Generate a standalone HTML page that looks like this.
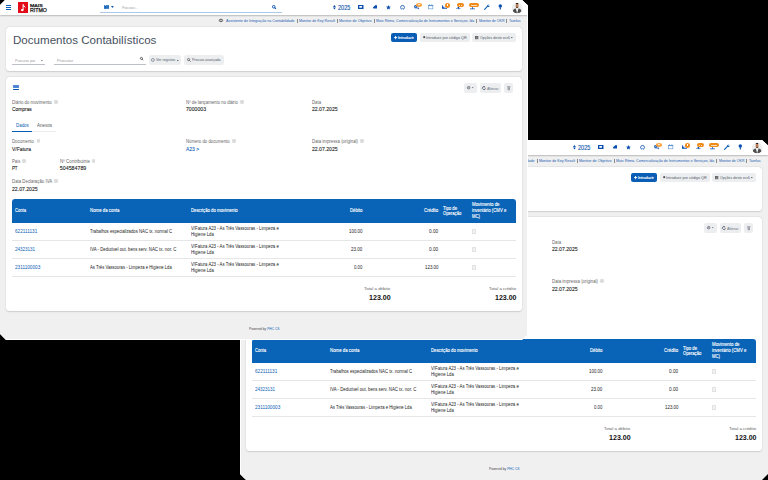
<!DOCTYPE html>
<html><head><meta charset="utf-8"><style>
*{margin:0;padding:0;box-sizing:border-box}
html,body{width:768px;height:480px;overflow:hidden;background:#000}
body{position:relative;font-family:"Liberation Sans",sans-serif}
.win{position:absolute;width:528px;height:340px;background:#f0f0f0;overflow:hidden;clip-path:polygon(5px 0,522px 0,528px 5.5px,528px 334px,522px 340px,6px 340px,0 334px,0 5px)}
.a{position:absolute;white-space:nowrap}
.card{position:absolute;background:#fff;border-radius:3.5px;box-shadow:0 0 0 0.4px rgba(0,0,0,.05),0 0.6px 1.4px rgba(0,0,0,.12)}

</style></head><body>
<div class="win" style="left:240px;top:140px"><div class="a" style="left:0px;top:0px;width:528.00px;height:15.00px;background:#fff;box-shadow:0 0.6px 1.2px rgba(0,0,0,.22)"></div>
<div class="a" style="left:6px;top:5px;width:5.20px;height:1.00px;background:#0a5db4;"></div>
<div class="a" style="left:6px;top:7px;width:5.20px;height:1.00px;background:#0a5db4;"></div>
<div class="a" style="left:6px;top:9px;width:5.20px;height:1.00px;background:#0a5db4;"></div>
<div class="a" style="left:17.5px;top:2px;width:10.70px;height:10.80px;background:#e30b17;"></div>
<svg class="a" style="left:17.5px;top:2px" width="10.7" height="10.8" viewBox="0 0 10.7 10.8"><rect x="4.6" y="2.1" width="1" height="6.2" fill="#fff"/><ellipse cx="4.2" cy="8.1" rx="1.35" ry="1.15" fill="#fff"/><path d="M5.1 2.1 C5.4 3.6 7.9 4.2 7.4 6.4 C7.1 5.2 6.3 4.6 5.3 4.4 Z" fill="#fff"/></svg>
<div class="a" style="left:29.90px;top:4px;font-size:4.3px;line-height:4.3px;color:#1a1a1a;transform:scaleX(1.2176);transform-origin:0 0;-webkit-text-stroke:0.25px #1a1a1a;">MAIS</div>
<div class="a" style="left:29.90px;top:9px;font-size:4.9px;line-height:4.9px;color:#1a1a1a;transform:scaleX(1.0706);transform-origin:0 0;-webkit-text-stroke:0.25px #1a1a1a;">RITMO</div>
<div class="a" style="left:100px;top:11.8px;width:181.50px;height:0.70px;background:#a9c8ea;"></div>
<div class="a" style="left:104px;top:5.6px;width:4.50px;height:3.60px;background:#0a5db4;"></div>
<div class="a" style="left:122.00px;top:6px;font-size:4.2px;line-height:4.2px;color:#9a9a9a;transform:scaleX(0.8000);transform-origin:0 0;">Procurar...</div>
<div class="a" style="left:337.50px;top:5px;font-size:6.4px;line-height:6.4px;color:#1a5cb0;transform:scaleX(0.8639);transform-origin:0 0;-webkit-text-stroke:0.15px #1a5cb0;">2025</div>
<div class="a" style="left:225.70px;top:20px;font-size:3.8px;line-height:3.8px;color:#1a5cb0;transform:scaleX(0.9621);transform-origin:0 0;">Assistente de Integração na Contabilidade</div>
<div class="a" style="left:299.00px;top:20px;font-size:3.8px;line-height:3.8px;color:#1a5cb0;transform:scaleX(0.9630);transform-origin:0 0;">Monitor de Key Result</div>
<div class="a" style="left:339.00px;top:20px;font-size:3.8px;line-height:3.8px;color:#1a5cb0;transform:scaleX(0.9864);transform-origin:0 0;">Monitor de Objetivo</div>
<div class="a" style="left:376.00px;top:20px;font-size:3.8px;line-height:3.8px;color:#1a5cb0;transform:scaleX(0.9509);transform-origin:0 0;">Mais Ritmo, Comercialização de Instrumentos e Serviços, lda</div>
<div class="a" style="left:478.50px;top:20px;font-size:3.8px;line-height:3.8px;color:#1a5cb0;transform:scaleX(0.9360);transform-origin:0 0;">Monitor de OKR</div>
<div class="a" style="left:508.50px;top:20px;font-size:3.8px;line-height:3.8px;color:#1a5cb0;transform:scaleX(0.9229);transform-origin:0 0;">Tarefas</div>
<div class="a" style="left:296.5px;top:19.3px;width:0.40px;height:3.60px;background:#8a8a8a;"></div>
<div class="a" style="left:337px;top:19.3px;width:0.40px;height:3.60px;background:#8a8a8a;"></div>
<div class="a" style="left:373.8px;top:19.3px;width:0.40px;height:3.60px;background:#8a8a8a;"></div>
<div class="a" style="left:476.3px;top:19.3px;width:0.40px;height:3.60px;background:#8a8a8a;"></div>
<div class="a" style="left:506.3px;top:19.3px;width:0.40px;height:3.60px;background:#8a8a8a;"></div>
<div class="card" style="left:6px;top:27px;width:516px;height:44px"></div>
<div class="a" style="left:13.00px;top:35px;font-size:10.9px;line-height:10.9px;color:#465061;transform:scaleX(1.0622);transform-origin:0 0;">Documentos Contabilísticos</div>
<div class="a" style="left:14.80px;top:59px;font-size:4.2px;line-height:4.2px;color:#9a9a9a;transform:scaleX(0.8697);transform-origin:0 0;">Procurar por</div>
<div class="a" style="left:12px;top:64.3px;width:33.00px;height:0.60px;background:#bcc0c8;"></div>
<div class="a" style="left:57.00px;top:59px;font-size:4.2px;line-height:4.2px;color:#999;">Procurar</div>
<div class="a" style="left:53.8px;top:64.3px;width:92.20px;height:0.60px;background:#bcc0c8;"></div>
<div class="a" style="left:148.8px;top:55.4px;width:32.7px;height:9.5px;background:#eceef0;border-radius:2.5px"></div>
<div class="a" style="left:156.10px;top:58px;font-size:4.2px;line-height:4.2px;color:#4f5966;transform:scaleX(0.8793);transform-origin:0 0;">Ver registos</div>
<div class="a" style="left:184.2px;top:55.4px;width:39.6px;height:9.5px;background:#eceef0;border-radius:2.5px"></div>
<div class="a" style="left:192.30px;top:58px;font-size:4.2px;line-height:4.2px;color:#4f5966;transform:scaleX(0.8390);transform-origin:0 0;">Procura avançada</div>
<div class="a" style="left:390.9px;top:32.7px;width:26.2px;height:9.3px;background:#0a5db4;border-radius:2px"></div>
<div class="a" style="left:398.20px;top:36px;font-size:4.3px;line-height:4.3px;color:#fff;transform:scaleX(0.8815);transform-origin:0 0;-webkit-text-stroke:0.15px #fff;">Introduzir</div>
<div class="a" style="left:420.1px;top:32.8px;width:49.9px;height:9.1px;background:#eceef0;border-radius:2px"></div>
<div class="a" style="left:426.20px;top:36px;font-size:4.2px;line-height:4.2px;color:#4f5966;transform:scaleX(0.8895);transform-origin:0 0;">Introduzir por código QR</div>
<div class="a" style="left:472.3px;top:32.8px;width:43.3px;height:9px;background:#eceef0;border-radius:2px"></div>
<div class="a" style="left:479.90px;top:36px;font-size:4.2px;line-height:4.2px;color:#4f5966;transform:scaleX(0.8482);transform-origin:0 0;">Opções deste ecrã</div>
<div class="card" style="left:6px;top:77px;width:516px;height:234.2px"></div>
<div class="a" style="left:248.70px;top:327px;font-size:4.0px;line-height:4.0px;color:#444;transform:scaleX(0.8166);transform-origin:0 0;">Powered by <span style="color:#0a5db4">PHC CS</span></div>
<div class="a" style="left:12.8px;top:84.9px;width:5.80px;height:2.90px;background:#4d88d2;border-radius:0.4px"></div>
<div class="a" style="left:12.8px;top:88.9px;width:5.80px;height:1.30px;background:#0a4fb0;border-radius:0.5px"></div>
<div class="a" style="left:12.00px;top:101px;font-size:4.5px;line-height:4.5px;color:#666;transform:scaleX(0.9620);transform-origin:0 0;">Diário do movimento</div>
<div class="a" style="left:54.20px;top:99.80px;width:3.4px;height:4px;border-radius:1.4px;background:#dcdcdc"></div>
<div class="a" style="left:12.00px;top:107px;font-size:5.3px;line-height:5.3px;color:#1e1e1e;transform:scaleX(0.9209);transform-origin:0 0;-webkit-text-stroke:0.1px #1e1e1e;">Compras</div>
<div class="a" style="left:186.00px;top:101px;font-size:4.5px;line-height:4.5px;color:#666;transform:scaleX(0.9561);transform-origin:0 0;">Nº de lançamento no diário</div>
<div class="a" style="left:240.20px;top:99.80px;width:3.4px;height:4px;border-radius:1.4px;background:#dcdcdc"></div>
<div class="a" style="left:186.00px;top:107px;font-size:5.3px;line-height:5.3px;color:#1e1e1e;transform:scaleX(0.9693);transform-origin:0 0;-webkit-text-stroke:0.1px #1e1e1e;">7000003</div>
<div class="a" style="left:312.00px;top:101px;font-size:4.5px;line-height:4.5px;color:#666;transform:scaleX(0.9468);transform-origin:0 0;">Data</div>
<div class="a" style="left:312.00px;top:107px;font-size:5.3px;line-height:5.3px;color:#1e1e1e;transform:scaleX(0.9651);transform-origin:0 0;-webkit-text-stroke:0.1px #1e1e1e;">22.07.2025</div>
<div class="a" style="left:15.90px;top:124px;font-size:4.6px;line-height:4.6px;color:#0a5db4;transform:scaleX(0.9626);transform-origin:0 0;">Dados</div>
<div class="a" style="left:36.80px;top:124px;font-size:4.6px;line-height:4.6px;color:#555;transform:scaleX(0.9842);transform-origin:0 0;">Anexos</div>
<div class="a" style="left:12px;top:131.2px;width:44.30px;height:0.40px;background:#ececec;"></div>
<div class="a" style="left:12px;top:130.9px;width:20.40px;height:0.80px;background:#0a5db4;"></div>
<div class="a" style="left:12.10px;top:140px;font-size:4.5px;line-height:4.5px;color:#666;transform:scaleX(0.9517);transform-origin:0 0;">Documento</div>
<div class="a" style="left:36.70px;top:138.80px;width:3.4px;height:4px;border-radius:1.4px;background:#dcdcdc"></div>
<div class="a" style="left:12.10px;top:147px;font-size:5.3px;line-height:5.3px;color:#1e1e1e;transform:scaleX(0.9348);transform-origin:0 0;-webkit-text-stroke:0.1px #1e1e1e;">V/Fatura</div>
<div class="a" style="left:186.00px;top:140px;font-size:4.5px;line-height:4.5px;color:#666;transform:scaleX(0.9525);transform-origin:0 0;">Número do documento</div>
<div class="a" style="left:232.20px;top:138.80px;width:3.4px;height:4px;border-radius:1.4px;background:#dcdcdc"></div>
<div class="a" style="left:186.00px;top:147px;font-size:5.3px;line-height:5.3px;color:#0a5db4;transform:scaleX(0.9359);transform-origin:0 0;-webkit-text-stroke:0.1px #0a5db4;">A23 &gt;</div>
<div class="a" style="left:312.00px;top:140px;font-size:4.5px;line-height:4.5px;color:#666;transform:scaleX(0.9630);transform-origin:0 0;">Data impressa (original)</div>
<div class="a" style="left:360.40px;top:138.80px;width:3.4px;height:4px;border-radius:1.4px;background:#dcdcdc"></div>
<div class="a" style="left:312.00px;top:147px;font-size:5.3px;line-height:5.3px;color:#1e1e1e;transform:scaleX(0.9651);transform-origin:0 0;-webkit-text-stroke:0.1px #1e1e1e;">22.07.2025</div>
<div class="a" style="left:12.10px;top:160px;font-size:4.5px;line-height:4.5px;color:#666;transform:scaleX(0.9107);transform-origin:0 0;">País</div>
<div class="a" style="left:22.30px;top:158.80px;width:3.4px;height:4px;border-radius:1.4px;background:#dcdcdc"></div>
<div class="a" style="left:12.10px;top:166px;font-size:5.3px;line-height:5.3px;color:#1e1e1e;transform:scaleX(0.8121);transform-origin:0 0;-webkit-text-stroke:0.1px #1e1e1e;">PT</div>
<div class="a" style="left:59.80px;top:160px;font-size:4.5px;line-height:4.5px;color:#666;transform:scaleX(0.9833);transform-origin:0 0;">Nº Contribuinte</div>
<div class="a" style="left:92.00px;top:158.80px;width:3.4px;height:4px;border-radius:1.4px;background:#dcdcdc"></div>
<div class="a" style="left:59.80px;top:166px;font-size:5.3px;line-height:5.3px;color:#1e1e1e;-webkit-text-stroke:0.1px #1e1e1e;">504584789</div>
<div class="a" style="left:12.10px;top:180px;font-size:4.5px;line-height:4.5px;color:#666;transform:scaleX(0.9619);transform-origin:0 0;">Data Declaração IVA</div>
<div class="a" style="left:54.30px;top:178.80px;width:3.4px;height:4px;border-radius:1.4px;background:#dcdcdc"></div>
<div class="a" style="left:12.10px;top:187px;font-size:5.3px;line-height:5.3px;color:#1e1e1e;transform:scaleX(0.9689);transform-origin:0 0;-webkit-text-stroke:0.1px #1e1e1e;">22.07.2025</div>
<div class="a" style="left:464px;top:83.1px;width:12.600000000000023px;height:9.6px;background:#eceef0;border-radius:2px"></div>
<div class="a" style="left:479.5px;top:83.1px;width:21.5px;height:9.6px;background:#eceef0;border-radius:2px"></div>
<div class="a" style="left:504px;top:83.1px;width:9px;height:9.6px;background:#eceef0;border-radius:2px"></div>
<div class="a" style="left:487.00px;top:87px;font-size:4.4px;line-height:4.4px;color:#6a7180;transform:scaleX(0.8951);transform-origin:0 0;">Alterar</div>
<div class="a" style="left:12px;top:199px;width:503.8px;height:23.7px;background:#0964b7;border-radius:3px 3px 0 0"></div>
<div class="a" style="left:14.80px;top:209px;font-size:4.7px;line-height:4.7px;color:#fff;transform:scaleX(0.8850);transform-origin:0 0;-webkit-text-stroke:0.12px #fff;">Conta</div>
<div class="a" style="left:89.80px;top:209px;font-size:4.7px;line-height:4.7px;color:#fff;transform:scaleX(0.9255);transform-origin:0 0;-webkit-text-stroke:0.12px #fff;">Nome da conta</div>
<div class="a" style="left:191.00px;top:209px;font-size:4.7px;line-height:4.7px;color:#fff;transform:scaleX(0.9049);transform-origin:0 0;-webkit-text-stroke:0.12px #fff;">Descrição do movimento</div>
<div class="a" style="left:349.80px;top:209px;font-size:4.7px;line-height:4.7px;color:#fff;transform:scaleX(0.9201);transform-origin:0 0;-webkit-text-stroke:0.12px #fff;">Débito</div>
<div class="a" style="left:423.80px;top:209px;font-size:4.7px;line-height:4.7px;color:#fff;transform:scaleX(0.9438);transform-origin:0 0;-webkit-text-stroke:0.12px #fff;">Crédito</div>
<div class="a" style="left:442.90px;top:207px;font-size:4.7px;line-height:4.7px;color:#fff;transform:scaleX(0.9095);transform-origin:0 0;-webkit-text-stroke:0.12px #fff;">Tipo de</div>
<div class="a" style="left:442.90px;top:212px;font-size:4.7px;line-height:4.7px;color:#fff;transform:scaleX(0.8866);transform-origin:0 0;-webkit-text-stroke:0.12px #fff;">Operação</div>
<div class="a" style="left:472.00px;top:203px;font-size:4.7px;line-height:4.7px;color:#fff;transform:scaleX(0.9350);transform-origin:0 0;-webkit-text-stroke:0.12px #fff;">Movimento de</div>
<div class="a" style="left:472.00px;top:209px;font-size:4.7px;line-height:4.7px;color:#fff;transform:scaleX(0.9172);transform-origin:0 0;-webkit-text-stroke:0.12px #fff;">inventário (CMV e</div>
<div class="a" style="left:472.00px;top:215px;font-size:4.7px;line-height:4.7px;color:#fff;transform:scaleX(0.9015);transform-origin:0 0;-webkit-text-stroke:0.12px #fff;">MC)</div>
<div class="a" style="left:14.80px;top:230px;font-size:4.9px;line-height:4.9px;color:#0a5db4;transform:scaleX(0.9515);transform-origin:0 0;">622111131</div>
<div class="a" style="left:90.20px;top:230px;font-size:4.7px;line-height:4.7px;color:#222;transform:scaleX(0.9071);transform-origin:0 0;">Trabalhos especializados NAC tx. normal C</div>
<div class="a" style="left:191.00px;top:227px;font-size:4.7px;line-height:4.7px;color:#222;transform:scaleX(0.9137);transform-origin:0 0;">V/Fatura A23 - As Três Vassouras - Limpeza e</div>
<div class="a" style="left:191.00px;top:233px;font-size:4.7px;line-height:4.7px;color:#222;transform:scaleX(0.9129);transform-origin:0 0;">Higiene Lda</div>
<div class="a" style="left:348.80px;top:229px;font-size:5.0px;line-height:5.0px;color:#222;transform:scaleX(0.8828);transform-origin:0 0;">100.00</div>
<div class="a" style="left:429.00px;top:229px;font-size:5.0px;line-height:5.0px;color:#222;transform:scaleX(0.9351);transform-origin:0 0;">0.00</div>
<div class="a" style="left:471.8px;top:229.00px;width:4.3px;height:4.8px;background:#f2f2f2;border:0.5px solid #e2e2e2;border-radius:0.6px"></div>
<div class="a" style="left:12px;top:240.2px;width:503.80px;height:0.50px;background:#e6e6e6;"></div>
<div class="a" style="left:14.80px;top:248px;font-size:4.9px;line-height:4.9px;color:#0a5db4;transform:scaleX(0.9174);transform-origin:0 0;">24323131</div>
<div class="a" style="left:90.20px;top:248px;font-size:4.7px;line-height:4.7px;color:#222;transform:scaleX(0.9200);transform-origin:0 0;">IVA - Dedutível out. bens serv. NAC tx. nor. C</div>
<div class="a" style="left:191.00px;top:245px;font-size:4.7px;line-height:4.7px;color:#222;transform:scaleX(0.9137);transform-origin:0 0;">V/Fatura A23 - As Três Vassouras - Limpeza e</div>
<div class="a" style="left:191.00px;top:251px;font-size:4.7px;line-height:4.7px;color:#222;transform:scaleX(0.9129);transform-origin:0 0;">Higiene Lda</div>
<div class="a" style="left:351.00px;top:247px;font-size:5.0px;line-height:5.0px;color:#222;transform:scaleX(0.9031);transform-origin:0 0;">23.00</div>
<div class="a" style="left:429.00px;top:247px;font-size:5.0px;line-height:5.0px;color:#222;transform:scaleX(0.9351);transform-origin:0 0;">0.00</div>
<div class="a" style="left:471.8px;top:247.00px;width:4.3px;height:4.8px;background:#f2f2f2;border:0.5px solid #e2e2e2;border-radius:0.6px"></div>
<div class="a" style="left:12px;top:258.2px;width:503.80px;height:0.50px;background:#e6e6e6;"></div>
<div class="a" style="left:14.80px;top:266px;font-size:4.9px;line-height:4.9px;color:#0a5db4;transform:scaleX(0.9538);transform-origin:0 0;">2311100003</div>
<div class="a" style="left:90.20px;top:266px;font-size:4.7px;line-height:4.7px;color:#222;transform:scaleX(0.8977);transform-origin:0 0;">As Três Vassouras - Limpeza e Higiene Lda</div>
<div class="a" style="left:191.00px;top:263px;font-size:4.7px;line-height:4.7px;color:#222;transform:scaleX(0.9137);transform-origin:0 0;">V/Fatura A23 - As Três Vassouras - Limpeza e</div>
<div class="a" style="left:191.00px;top:269px;font-size:4.7px;line-height:4.7px;color:#222;transform:scaleX(0.9129);transform-origin:0 0;">Higiene Lda</div>
<div class="a" style="left:354.00px;top:265px;font-size:5.0px;line-height:5.0px;color:#222;transform:scaleX(0.8529);transform-origin:0 0;">0.00</div>
<div class="a" style="left:424.60px;top:265px;font-size:5.0px;line-height:5.0px;color:#222;transform:scaleX(0.8828);transform-origin:0 0;">123.00</div>
<div class="a" style="left:471.8px;top:265.00px;width:4.3px;height:4.8px;background:#f2f2f2;border:0.5px solid #e2e2e2;border-radius:0.6px"></div>
<div class="a" style="left:12px;top:276.20000000000005px;width:503.80px;height:0.50px;background:#e6e6e6;"></div>
<div class="a" style="left:364.00px;top:287px;font-size:4.2px;line-height:4.2px;color:#666;transform:scaleX(1.0486);transform-origin:0 0;">Total a débito</div>
<div class="a" style="left:368.50px;top:294px;font-size:7.6px;line-height:7.6px;color:#111;font-weight:bold;transform:scaleX(0.9335);transform-origin:0 0;">123.00</div>
<div class="a" style="left:489.00px;top:287px;font-size:4.2px;line-height:4.2px;color:#666;transform:scaleX(1.0403);transform-origin:0 0;">Total a crédito</div>
<div class="a" style="left:494.70px;top:294px;font-size:7.6px;line-height:7.6px;color:#111;font-weight:bold;transform:scaleX(0.9249);transform-origin:0 0;">123.00</div>
<svg class="a" style="left:332.6px;top:5.2px;overflow:visible" width="2.9" height="4.4" viewBox="0 0 2.9 4.4"><path d="M1.45 0 L2.9 1.9 L0 1.9 Z M0 2.5 L2.9 2.5 L1.45 4.4 Z" fill="#0a4fb0"/></svg>
<svg class="a" style="left:358.4px;top:5.1px;overflow:visible" width="5.5" height="4.4" viewBox="0 0 5.5 4.4"><path d="M0 0 H5.5 V3.9 L5.2 4.3 L4.7 3.9 H0 Z M1.3 1 V2.7 H3.6 L4 2.2 V1 Z" fill="#0a4fb0" fill-rule="evenodd"/></svg>
<svg class="a" style="left:373px;top:5.4px;overflow:visible" width="4" height="3.4" viewBox="0 0 4 3.4"><path d="M0.3 3.4 L0 2.2 L1.2 1.2 L2.2 0.2 L3.6 0 L4 1 L4 3.4 Z" fill="#0a4fb0"/></svg>
<svg class="a" style="left:386.3px;top:4.8px;overflow:visible" width="4.9" height="4.6" viewBox="0 0 4.9 4.6"><path d="M2.45 0 L3.1 1.6 L4.9 1.7 L3.55 2.85 L4 4.6 L2.45 3.65 L0.9 4.6 L1.35 2.85 L0 1.7 L1.8 1.6 Z" fill="#0a4fb0"/></svg>
<svg class="a" style="left:400px;top:4.9px;overflow:visible" width="5.1" height="4.7" viewBox="0 0 5.1 4.7"><circle cx="2.55" cy="2.4" r="1.95" fill="none" stroke="#0a4fb0" stroke-width="0.8"/><path d="M2.55 2.4 L1.9 4.7 H3.2 Z" fill="#fff"/><path d="M2.55 2.3 L2.25 3.9 H2.85Z" fill="#0a4fb0"/></svg>
<svg class="a" style="left:413.5px;top:5.2px;overflow:visible" width="5.6" height="4.3" viewBox="0 0 5.6 4.3"><circle cx="1.75" cy="1.75" r="1.25" fill="none" stroke="#0a4fb0" stroke-width="1.1" stroke-dasharray="0.7 0.35"/><circle cx="1.75" cy="1.75" r="0.9" fill="none" stroke="#0a4fb0" stroke-width="0.8"/><circle cx="4.3" cy="3.3" r="0.85" fill="#0a4fb0"/><circle cx="4.3" cy="3.3" r="0.3" fill="#fff"/></svg>
<div class="a" style="left:416px;top:3px;width:6.3px;height:3.5px;border-radius:50%;background:#f6a445"></div>
<div class="a" style="left:418.4px;top:4.4px;width:1.6px;height:0.8px;background:#fde4c4"></div>
<svg class="a" style="left:427.9px;top:4.4px;overflow:visible" width="5.2" height="5.2" viewBox="0 0 5.2 5.2"><rect x="0.35" y="1.3" width="4.5" height="3.55" fill="none" stroke="#5b95d6" stroke-width="0.6"/><rect x="0" y="1" width="5.2" height="1.1" fill="#5b95d6"/><rect x="1" y="0.1" width="0.6" height="1" fill="#5b95d6"/><rect x="3.6" y="0.1" width="0.6" height="1" fill="#5b95d6"/></svg>
<svg class="a" style="left:442px;top:5.3px;overflow:visible" width="4.9" height="3.7" viewBox="0 0 4.9 3.7"><path d="M0 0.2 H0.8 V3.7 H0 Z M0 1.6 H2.4 V3.7 H0Z M2.4 2.8 H4.9 V3.7 H2.4 Z" fill="#0a4fb0"/><path d="M0.8 1.6 L2.4 2.9 L2.4 1.6 Z" fill="#fff"/></svg>
<div class="a" style="left:444.9px;top:3px;width:5.2px;height:4.9px;border-radius:50%;background:#f08a17"></div>
<div class="a" style="left:447px;top:4.3px;width:1px;height:2px;background:#fff"></div>
<svg class="a" style="left:456.3px;top:7.4px;overflow:visible" width="4.6" height="2.2" viewBox="0 0 4.6 2.2"><path d="M1.6 0 H3.2 V0.9 H4.6 V1.5 H3.2 V2.2 H2.4 V1.5 H0 V0.9 H1.6Z" fill="#0a4fb0"/></svg>
<div class="a" style="left:456.6px;top:3px;width:7.5px;height:4.3px;border-radius:2.2px;background:#f08a17"></div>
<div class="a" style="left:458.6px;top:4.6px;width:1.2px;height:1.2px;background:#fde0bd;box-shadow:2px 0 0 #fde0bd"></div>
<svg class="a" style="left:470.1px;top:7.4px;overflow:visible" width="4.9" height="2.2" viewBox="0 0 4.9 2.2"><path d="M2.1 0 H2.8 V1.4 H4.9 V2.2 H0 V1.4 H2.1Z" fill="#0a4fb0"/></svg>
<div class="a" style="left:468.9px;top:3px;width:9.8px;height:4.3px;border-radius:2.2px;background:#f08a17"></div>
<div class="a" style="left:471.4px;top:4.6px;width:1.2px;height:1.2px;background:#fde0bd;box-shadow:2px 0 0 #fde0bd,4px 0 0 #fde0bd"></div>
<svg class="a" style="left:484px;top:4.4px;overflow:visible" width="6" height="5.6" viewBox="0 0 6 5.6"><path d="M0.6 5.3 L3.6 2.2" stroke="#0a5db4" stroke-width="1.1" stroke-linecap="round"/><path d="M3.2 2.6 C3 1.4 3.8 0.5 5 0.6 L4.2 1.5 L4.6 2.1 L5.5 1.4 C5.7 2.5 4.8 3.3 3.7 3" fill="#0a5db4"/></svg>
<svg class="a" style="left:498.1px;top:4.4px;overflow:visible" width="4.4" height="5.6" viewBox="0 0 4.4 5.6"><circle cx="2.3" cy="2" r="1.75" fill="#0a4fb0"/><rect x="1.7" y="3.4" width="1.2" height="1.6" fill="#0a4fb0"/><rect x="1.9" y="5" width="0.8" height="0.6" fill="#0a4fb0"/></svg>
<svg class="a" style="left:512.2px;top:1.9px;overflow:visible" width="10.3" height="11.5" viewBox="0 0 10.3 11.5"><defs><clipPath id="avc"><circle cx="5.15" cy="5.9" r="5.4"/></clipPath></defs><circle cx="5.15" cy="5.9" r="5.4" fill="#eeeeee"/><g clip-path="url(#avc)"><path d="M0.4 11.6 C0.5 8.2 1.5 6.9 3.4 6.4 L5.15 7.2 L6.9 6.4 C8.8 6.9 9.8 8.2 9.9 11.6Z" fill="#4d4d4f"/><path d="M3.8 6.5 L5.15 11.6 L6.5 6.5 L5.15 7.1Z" fill="#f4f4f4"/><ellipse cx="5.1" cy="3.7" rx="1.45" ry="2.2" fill="#bb7b52"/><path d="M3.5 2.6 C3.3 0.4 6.9 0.4 6.7 2.6 L6.4 2.1 L3.8 2.1Z" fill="#2b1e16"/><path d="M3.8 4.6 C4 6.6 6.2 6.6 6.4 4.6 L5.9 5.3 H4.3Z" fill="#3d2819"/></g></svg>
<svg class="a" style="left:103.7px;top:4.9px;overflow:visible" width="5.1" height="4.1" viewBox="0 0 5.1 4.1"><path d="M0 0 H1.3 V1 H0Z M1.8 0 H5.1 V1 H1.8Z M0 1.5 H1.3 V2.6 H0Z M1.8 1.5 H5.1 V2.6 H1.8Z M0 3.1 H1.3 V4.1 H0Z M1.8 3.1 H5.1 V4.1 H1.8Z" fill="#4a86cc"/></svg>
<svg class="a" style="left:110.9px;top:6.1px;overflow:visible" width="2.8" height="1.9" viewBox="0 0 2.8 1.9"><path d="M0 0 H2.8 L1.4 1.9Z" fill="#0a4fb0"/></svg>
<svg class="a" style="left:271.8px;top:5.1px;overflow:visible" width="4.2" height="4.2" viewBox="0 0 4.2 4.2"><circle cx="1.75" cy="1.75" r="1.3" fill="none" stroke="#0a4fb0" stroke-width="0.95"/><path d="M2.7 2.7 L3.9 3.9" stroke="#0a4fb0" stroke-width="1.1"/></svg>
<svg class="a" style="left:219px;top:19.2px;overflow:visible" width="3.9" height="2.9" viewBox="0 0 3.9 2.9"><ellipse cx="1.95" cy="1.45" rx="1.7" ry="1.25" fill="none" stroke="#333" stroke-width="0.8"/><circle cx="1.95" cy="1.45" r="0.5" fill="#777"/></svg>
<svg class="a" style="left:139.6px;top:57.2px;overflow:visible" width="3.5" height="3.4" viewBox="0 0 3.5 3.4"><circle cx="1.4" cy="1.4" r="1.05" fill="none" stroke="#333" stroke-width="0.7"/><path d="M2.1 2.1 L3.2 3.2" stroke="#333" stroke-width="0.8"/></svg>
<svg class="a" style="left:41.1px;top:59.6px;overflow:visible" width="1.8" height="1.4" viewBox="0 0 1.8 1.4"><path d="M0 0 H1.8 L0.9 1.4Z" fill="#777"/></svg>
<svg class="a" style="left:151px;top:57.9px;overflow:visible" width="3.8" height="3.9" viewBox="0 0 3.8 3.9"><circle cx="1.9" cy="1.95" r="1.45" fill="none" stroke="#7a8594" stroke-width="0.8"/></svg>
<svg class="a" style="left:176.9px;top:59.5px;overflow:visible" width="1.6" height="1.3" viewBox="0 0 1.6 1.3"><path d="M0 0 H1.6 L0.8 1.3Z" fill="#333"/></svg>
<svg class="a" style="left:187px;top:57.7px;overflow:visible" width="4.2" height="3.8" viewBox="0 0 4.2 3.8"><circle cx="1.6" cy="1.6" r="1.1" fill="none" stroke="#555" stroke-width="0.8"/><path d="M2.4 2.4 L3.6 3.6" stroke="#555" stroke-width="0.9"/></svg>
<svg class="a" style="left:393.9px;top:35.7px;overflow:visible" width="3.2" height="3.2" viewBox="0 0 3.2 3.2"><path d="M1.6 0 V3.2 M0 1.6 H3.2" stroke="#fff" stroke-width="0.9"/></svg>
<svg class="a" style="left:423.1px;top:36.2px;overflow:visible" width="2.4" height="2.4" viewBox="0 0 2.4 2.4"><circle cx="1.2" cy="1.2" r="1.1" fill="#555"/></svg>
<svg class="a" style="left:475.2px;top:35.6px;overflow:visible" width="3.3" height="3.2" viewBox="0 0 3.3 3.2"><rect x="0" y="0" width="3.3" height="3.2" fill="#555"/><path d="M1.1 0.4 V3 M2.2 0.4 V3" stroke="#eee" stroke-width="0.35"/></svg>
<svg class="a" style="left:510.8px;top:37px;overflow:visible" width="1.7" height="1.2" viewBox="0 0 1.7 1.2"><path d="M0 0 H1.7 L0.85 1.2Z" fill="#333"/></svg>
<svg class="a" style="left:466.9px;top:86.2px;overflow:visible" width="3.3" height="3.3" viewBox="0 0 3.3 3.3"><circle cx="1.65" cy="1.65" r="1.25" fill="none" stroke="#555c68" stroke-width="0.75"/><path d="M0.8 2.5 L2.5 0.8" stroke="#555c68" stroke-width="0.6"/></svg>
<svg class="a" style="left:471.9px;top:87.3px;overflow:visible" width="1.5" height="1.2" viewBox="0 0 1.5 1.2"><path d="M0 0 H1.5 L0.75 1.2Z" fill="#555c68"/></svg>
<svg class="a" style="left:482.1px;top:85.9px;overflow:visible" width="4.2" height="3.9" viewBox="0 0 4.2 3.9"><path d="M3.2 1.1 A1.55 1.55 0 1 0 3.5 2.4" fill="none" stroke="#474e5a" stroke-width="0.8"/><path d="M2.6 1.9 L1.9 1.4" stroke="#474e5a" stroke-width="0.6"/></svg>
<svg class="a" style="left:507px;top:85.6px;overflow:visible" width="3.6" height="4.2" viewBox="0 0 3.6 4.2"><path d="M0.5 1.2 H3.1 L2.8 4.2 H0.8Z" fill="#8a8f9a"/><rect x="0" y="0.5" width="3.6" height="0.6" fill="#8a8f9a"/><rect x="1.2" y="0" width="1.2" height="0.5" fill="#8a8f9a"/><path d="M1.5 1.6 V3.8 M2.1 1.6 V3.8" stroke="#d8dade" stroke-width="0.3"/></svg><svg class="a" style="left:0;top:0" width="528" height="340"><polyline points="0.5,5 0.5,334.5 5.5,339.5" fill="none" stroke="#fff" stroke-width="1"/><polyline points="522,0 528,5.5" fill="none" stroke="#fff" stroke-width="1"/></svg></div>
<div class="win" style="left:0;top:0"><div class="a" style="left:0px;top:0px;width:528.00px;height:15.00px;background:#fff;box-shadow:0 0.6px 1.2px rgba(0,0,0,.22)"></div>
<div class="a" style="left:6px;top:5px;width:5.20px;height:1.00px;background:#0a5db4;"></div>
<div class="a" style="left:6px;top:7px;width:5.20px;height:1.00px;background:#0a5db4;"></div>
<div class="a" style="left:6px;top:9px;width:5.20px;height:1.00px;background:#0a5db4;"></div>
<div class="a" style="left:17.5px;top:2px;width:10.70px;height:10.80px;background:#e30b17;"></div>
<svg class="a" style="left:17.5px;top:2px" width="10.7" height="10.8" viewBox="0 0 10.7 10.8"><rect x="4.6" y="2.1" width="1" height="6.2" fill="#fff"/><ellipse cx="4.2" cy="8.1" rx="1.35" ry="1.15" fill="#fff"/><path d="M5.1 2.1 C5.4 3.6 7.9 4.2 7.4 6.4 C7.1 5.2 6.3 4.6 5.3 4.4 Z" fill="#fff"/></svg>
<div class="a" style="left:29.90px;top:4px;font-size:4.3px;line-height:4.3px;color:#1a1a1a;transform:scaleX(1.2176);transform-origin:0 0;-webkit-text-stroke:0.25px #1a1a1a;">MAIS</div>
<div class="a" style="left:29.90px;top:9px;font-size:4.9px;line-height:4.9px;color:#1a1a1a;transform:scaleX(1.0706);transform-origin:0 0;-webkit-text-stroke:0.25px #1a1a1a;">RITMO</div>
<div class="a" style="left:100px;top:11.8px;width:181.50px;height:0.70px;background:#a9c8ea;"></div>
<div class="a" style="left:104px;top:5.6px;width:4.50px;height:3.60px;background:#0a5db4;"></div>
<div class="a" style="left:122.00px;top:6px;font-size:4.2px;line-height:4.2px;color:#9a9a9a;transform:scaleX(0.8000);transform-origin:0 0;">Procurar...</div>
<div class="a" style="left:337.50px;top:5px;font-size:6.4px;line-height:6.4px;color:#1a5cb0;transform:scaleX(0.8639);transform-origin:0 0;-webkit-text-stroke:0.15px #1a5cb0;">2025</div>
<div class="a" style="left:225.70px;top:20px;font-size:3.8px;line-height:3.8px;color:#1a5cb0;transform:scaleX(0.9621);transform-origin:0 0;">Assistente de Integração na Contabilidade</div>
<div class="a" style="left:299.00px;top:20px;font-size:3.8px;line-height:3.8px;color:#1a5cb0;transform:scaleX(0.9630);transform-origin:0 0;">Monitor de Key Result</div>
<div class="a" style="left:339.00px;top:20px;font-size:3.8px;line-height:3.8px;color:#1a5cb0;transform:scaleX(0.9864);transform-origin:0 0;">Monitor de Objetivo</div>
<div class="a" style="left:376.00px;top:20px;font-size:3.8px;line-height:3.8px;color:#1a5cb0;transform:scaleX(0.9509);transform-origin:0 0;">Mais Ritmo, Comercialização de Instrumentos e Serviços, lda</div>
<div class="a" style="left:478.50px;top:20px;font-size:3.8px;line-height:3.8px;color:#1a5cb0;transform:scaleX(0.9360);transform-origin:0 0;">Monitor de OKR</div>
<div class="a" style="left:508.50px;top:20px;font-size:3.8px;line-height:3.8px;color:#1a5cb0;transform:scaleX(0.9229);transform-origin:0 0;">Tarefas</div>
<div class="a" style="left:296.5px;top:19.3px;width:0.40px;height:3.60px;background:#8a8a8a;"></div>
<div class="a" style="left:337px;top:19.3px;width:0.40px;height:3.60px;background:#8a8a8a;"></div>
<div class="a" style="left:373.8px;top:19.3px;width:0.40px;height:3.60px;background:#8a8a8a;"></div>
<div class="a" style="left:476.3px;top:19.3px;width:0.40px;height:3.60px;background:#8a8a8a;"></div>
<div class="a" style="left:506.3px;top:19.3px;width:0.40px;height:3.60px;background:#8a8a8a;"></div>
<div class="card" style="left:6px;top:27px;width:516px;height:44px"></div>
<div class="a" style="left:13.00px;top:35px;font-size:10.9px;line-height:10.9px;color:#465061;transform:scaleX(1.0622);transform-origin:0 0;">Documentos Contabilísticos</div>
<div class="a" style="left:14.80px;top:59px;font-size:4.2px;line-height:4.2px;color:#9a9a9a;transform:scaleX(0.8697);transform-origin:0 0;">Procurar por</div>
<div class="a" style="left:12px;top:64.3px;width:33.00px;height:0.60px;background:#bcc0c8;"></div>
<div class="a" style="left:57.00px;top:59px;font-size:4.2px;line-height:4.2px;color:#999;">Procurar</div>
<div class="a" style="left:53.8px;top:64.3px;width:92.20px;height:0.60px;background:#bcc0c8;"></div>
<div class="a" style="left:148.8px;top:55.4px;width:32.7px;height:9.5px;background:#eceef0;border-radius:2.5px"></div>
<div class="a" style="left:156.10px;top:58px;font-size:4.2px;line-height:4.2px;color:#4f5966;transform:scaleX(0.8793);transform-origin:0 0;">Ver registos</div>
<div class="a" style="left:184.2px;top:55.4px;width:39.6px;height:9.5px;background:#eceef0;border-radius:2.5px"></div>
<div class="a" style="left:192.30px;top:58px;font-size:4.2px;line-height:4.2px;color:#4f5966;transform:scaleX(0.8390);transform-origin:0 0;">Procura avançada</div>
<div class="a" style="left:390.9px;top:32.7px;width:26.2px;height:9.3px;background:#0a5db4;border-radius:2px"></div>
<div class="a" style="left:398.20px;top:36px;font-size:4.3px;line-height:4.3px;color:#fff;transform:scaleX(0.8815);transform-origin:0 0;-webkit-text-stroke:0.15px #fff;">Introduzir</div>
<div class="a" style="left:420.1px;top:32.8px;width:49.9px;height:9.1px;background:#eceef0;border-radius:2px"></div>
<div class="a" style="left:426.20px;top:36px;font-size:4.2px;line-height:4.2px;color:#4f5966;transform:scaleX(0.8895);transform-origin:0 0;">Introduzir por código QR</div>
<div class="a" style="left:472.3px;top:32.8px;width:43.3px;height:9px;background:#eceef0;border-radius:2px"></div>
<div class="a" style="left:479.90px;top:36px;font-size:4.2px;line-height:4.2px;color:#4f5966;transform:scaleX(0.8482);transform-origin:0 0;">Opções deste ecrã</div>
<div class="card" style="left:6px;top:77px;width:516px;height:234.2px"></div>
<div class="a" style="left:248.70px;top:327px;font-size:4.0px;line-height:4.0px;color:#444;transform:scaleX(0.8166);transform-origin:0 0;">Powered by <span style="color:#0a5db4">PHC CS</span></div>
<div class="a" style="left:12.8px;top:84.9px;width:5.80px;height:2.90px;background:#4d88d2;border-radius:0.4px"></div>
<div class="a" style="left:12.8px;top:88.9px;width:5.80px;height:1.30px;background:#0a4fb0;border-radius:0.5px"></div>
<div class="a" style="left:12.00px;top:101px;font-size:4.5px;line-height:4.5px;color:#666;transform:scaleX(0.9620);transform-origin:0 0;">Diário do movimento</div>
<div class="a" style="left:54.20px;top:99.80px;width:3.4px;height:4px;border-radius:1.4px;background:#dcdcdc"></div>
<div class="a" style="left:12.00px;top:107px;font-size:5.3px;line-height:5.3px;color:#1e1e1e;transform:scaleX(0.9209);transform-origin:0 0;-webkit-text-stroke:0.1px #1e1e1e;">Compras</div>
<div class="a" style="left:186.00px;top:101px;font-size:4.5px;line-height:4.5px;color:#666;transform:scaleX(0.9561);transform-origin:0 0;">Nº de lançamento no diário</div>
<div class="a" style="left:240.20px;top:99.80px;width:3.4px;height:4px;border-radius:1.4px;background:#dcdcdc"></div>
<div class="a" style="left:186.00px;top:107px;font-size:5.3px;line-height:5.3px;color:#1e1e1e;transform:scaleX(0.9693);transform-origin:0 0;-webkit-text-stroke:0.1px #1e1e1e;">7000003</div>
<div class="a" style="left:312.00px;top:101px;font-size:4.5px;line-height:4.5px;color:#666;transform:scaleX(0.9468);transform-origin:0 0;">Data</div>
<div class="a" style="left:312.00px;top:107px;font-size:5.3px;line-height:5.3px;color:#1e1e1e;transform:scaleX(0.9651);transform-origin:0 0;-webkit-text-stroke:0.1px #1e1e1e;">22.07.2025</div>
<div class="a" style="left:15.90px;top:124px;font-size:4.6px;line-height:4.6px;color:#0a5db4;transform:scaleX(0.9626);transform-origin:0 0;">Dados</div>
<div class="a" style="left:36.80px;top:124px;font-size:4.6px;line-height:4.6px;color:#555;transform:scaleX(0.9842);transform-origin:0 0;">Anexos</div>
<div class="a" style="left:12px;top:131.2px;width:44.30px;height:0.40px;background:#ececec;"></div>
<div class="a" style="left:12px;top:130.9px;width:20.40px;height:0.80px;background:#0a5db4;"></div>
<div class="a" style="left:12.10px;top:140px;font-size:4.5px;line-height:4.5px;color:#666;transform:scaleX(0.9517);transform-origin:0 0;">Documento</div>
<div class="a" style="left:36.70px;top:138.80px;width:3.4px;height:4px;border-radius:1.4px;background:#dcdcdc"></div>
<div class="a" style="left:12.10px;top:147px;font-size:5.3px;line-height:5.3px;color:#1e1e1e;transform:scaleX(0.9348);transform-origin:0 0;-webkit-text-stroke:0.1px #1e1e1e;">V/Fatura</div>
<div class="a" style="left:186.00px;top:140px;font-size:4.5px;line-height:4.5px;color:#666;transform:scaleX(0.9525);transform-origin:0 0;">Número do documento</div>
<div class="a" style="left:232.20px;top:138.80px;width:3.4px;height:4px;border-radius:1.4px;background:#dcdcdc"></div>
<div class="a" style="left:186.00px;top:147px;font-size:5.3px;line-height:5.3px;color:#0a5db4;transform:scaleX(0.9359);transform-origin:0 0;-webkit-text-stroke:0.1px #0a5db4;">A23 &gt;</div>
<div class="a" style="left:312.00px;top:140px;font-size:4.5px;line-height:4.5px;color:#666;transform:scaleX(0.9630);transform-origin:0 0;">Data impressa (original)</div>
<div class="a" style="left:360.40px;top:138.80px;width:3.4px;height:4px;border-radius:1.4px;background:#dcdcdc"></div>
<div class="a" style="left:312.00px;top:147px;font-size:5.3px;line-height:5.3px;color:#1e1e1e;transform:scaleX(0.9651);transform-origin:0 0;-webkit-text-stroke:0.1px #1e1e1e;">22.07.2025</div>
<div class="a" style="left:12.10px;top:160px;font-size:4.5px;line-height:4.5px;color:#666;transform:scaleX(0.9107);transform-origin:0 0;">País</div>
<div class="a" style="left:22.30px;top:158.80px;width:3.4px;height:4px;border-radius:1.4px;background:#dcdcdc"></div>
<div class="a" style="left:12.10px;top:166px;font-size:5.3px;line-height:5.3px;color:#1e1e1e;transform:scaleX(0.8121);transform-origin:0 0;-webkit-text-stroke:0.1px #1e1e1e;">PT</div>
<div class="a" style="left:59.80px;top:160px;font-size:4.5px;line-height:4.5px;color:#666;transform:scaleX(0.9833);transform-origin:0 0;">Nº Contribuinte</div>
<div class="a" style="left:92.00px;top:158.80px;width:3.4px;height:4px;border-radius:1.4px;background:#dcdcdc"></div>
<div class="a" style="left:59.80px;top:166px;font-size:5.3px;line-height:5.3px;color:#1e1e1e;-webkit-text-stroke:0.1px #1e1e1e;">504584789</div>
<div class="a" style="left:12.10px;top:180px;font-size:4.5px;line-height:4.5px;color:#666;transform:scaleX(0.9619);transform-origin:0 0;">Data Declaração IVA</div>
<div class="a" style="left:54.30px;top:178.80px;width:3.4px;height:4px;border-radius:1.4px;background:#dcdcdc"></div>
<div class="a" style="left:12.10px;top:187px;font-size:5.3px;line-height:5.3px;color:#1e1e1e;transform:scaleX(0.9689);transform-origin:0 0;-webkit-text-stroke:0.1px #1e1e1e;">22.07.2025</div>
<div class="a" style="left:464px;top:83.1px;width:12.600000000000023px;height:9.6px;background:#eceef0;border-radius:2px"></div>
<div class="a" style="left:479.5px;top:83.1px;width:21.5px;height:9.6px;background:#eceef0;border-radius:2px"></div>
<div class="a" style="left:504px;top:83.1px;width:9px;height:9.6px;background:#eceef0;border-radius:2px"></div>
<div class="a" style="left:487.00px;top:87px;font-size:4.4px;line-height:4.4px;color:#6a7180;transform:scaleX(0.8951);transform-origin:0 0;">Alterar</div>
<div class="a" style="left:12px;top:199px;width:503.8px;height:23.7px;background:#0964b7;border-radius:3px 3px 0 0"></div>
<div class="a" style="left:14.80px;top:209px;font-size:4.7px;line-height:4.7px;color:#fff;transform:scaleX(0.8850);transform-origin:0 0;-webkit-text-stroke:0.12px #fff;">Conta</div>
<div class="a" style="left:89.80px;top:209px;font-size:4.7px;line-height:4.7px;color:#fff;transform:scaleX(0.9255);transform-origin:0 0;-webkit-text-stroke:0.12px #fff;">Nome da conta</div>
<div class="a" style="left:191.00px;top:209px;font-size:4.7px;line-height:4.7px;color:#fff;transform:scaleX(0.9049);transform-origin:0 0;-webkit-text-stroke:0.12px #fff;">Descrição do movimento</div>
<div class="a" style="left:349.80px;top:209px;font-size:4.7px;line-height:4.7px;color:#fff;transform:scaleX(0.9201);transform-origin:0 0;-webkit-text-stroke:0.12px #fff;">Débito</div>
<div class="a" style="left:423.80px;top:209px;font-size:4.7px;line-height:4.7px;color:#fff;transform:scaleX(0.9438);transform-origin:0 0;-webkit-text-stroke:0.12px #fff;">Crédito</div>
<div class="a" style="left:442.90px;top:207px;font-size:4.7px;line-height:4.7px;color:#fff;transform:scaleX(0.9095);transform-origin:0 0;-webkit-text-stroke:0.12px #fff;">Tipo de</div>
<div class="a" style="left:442.90px;top:212px;font-size:4.7px;line-height:4.7px;color:#fff;transform:scaleX(0.8866);transform-origin:0 0;-webkit-text-stroke:0.12px #fff;">Operação</div>
<div class="a" style="left:472.00px;top:203px;font-size:4.7px;line-height:4.7px;color:#fff;transform:scaleX(0.9350);transform-origin:0 0;-webkit-text-stroke:0.12px #fff;">Movimento de</div>
<div class="a" style="left:472.00px;top:209px;font-size:4.7px;line-height:4.7px;color:#fff;transform:scaleX(0.9172);transform-origin:0 0;-webkit-text-stroke:0.12px #fff;">inventário (CMV e</div>
<div class="a" style="left:472.00px;top:215px;font-size:4.7px;line-height:4.7px;color:#fff;transform:scaleX(0.9015);transform-origin:0 0;-webkit-text-stroke:0.12px #fff;">MC)</div>
<div class="a" style="left:14.80px;top:230px;font-size:4.9px;line-height:4.9px;color:#0a5db4;transform:scaleX(0.9515);transform-origin:0 0;">622111131</div>
<div class="a" style="left:90.20px;top:230px;font-size:4.7px;line-height:4.7px;color:#222;transform:scaleX(0.9071);transform-origin:0 0;">Trabalhos especializados NAC tx. normal C</div>
<div class="a" style="left:191.00px;top:227px;font-size:4.7px;line-height:4.7px;color:#222;transform:scaleX(0.9137);transform-origin:0 0;">V/Fatura A23 - As Três Vassouras - Limpeza e</div>
<div class="a" style="left:191.00px;top:233px;font-size:4.7px;line-height:4.7px;color:#222;transform:scaleX(0.9129);transform-origin:0 0;">Higiene Lda</div>
<div class="a" style="left:348.80px;top:229px;font-size:5.0px;line-height:5.0px;color:#222;transform:scaleX(0.8828);transform-origin:0 0;">100.00</div>
<div class="a" style="left:429.00px;top:229px;font-size:5.0px;line-height:5.0px;color:#222;transform:scaleX(0.9351);transform-origin:0 0;">0.00</div>
<div class="a" style="left:471.8px;top:229.00px;width:4.3px;height:4.8px;background:#f2f2f2;border:0.5px solid #e2e2e2;border-radius:0.6px"></div>
<div class="a" style="left:12px;top:240.2px;width:503.80px;height:0.50px;background:#e6e6e6;"></div>
<div class="a" style="left:14.80px;top:248px;font-size:4.9px;line-height:4.9px;color:#0a5db4;transform:scaleX(0.9174);transform-origin:0 0;">24323131</div>
<div class="a" style="left:90.20px;top:248px;font-size:4.7px;line-height:4.7px;color:#222;transform:scaleX(0.9200);transform-origin:0 0;">IVA - Dedutível out. bens serv. NAC tx. nor. C</div>
<div class="a" style="left:191.00px;top:245px;font-size:4.7px;line-height:4.7px;color:#222;transform:scaleX(0.9137);transform-origin:0 0;">V/Fatura A23 - As Três Vassouras - Limpeza e</div>
<div class="a" style="left:191.00px;top:251px;font-size:4.7px;line-height:4.7px;color:#222;transform:scaleX(0.9129);transform-origin:0 0;">Higiene Lda</div>
<div class="a" style="left:351.00px;top:247px;font-size:5.0px;line-height:5.0px;color:#222;transform:scaleX(0.9031);transform-origin:0 0;">23.00</div>
<div class="a" style="left:429.00px;top:247px;font-size:5.0px;line-height:5.0px;color:#222;transform:scaleX(0.9351);transform-origin:0 0;">0.00</div>
<div class="a" style="left:471.8px;top:247.00px;width:4.3px;height:4.8px;background:#f2f2f2;border:0.5px solid #e2e2e2;border-radius:0.6px"></div>
<div class="a" style="left:12px;top:258.2px;width:503.80px;height:0.50px;background:#e6e6e6;"></div>
<div class="a" style="left:14.80px;top:266px;font-size:4.9px;line-height:4.9px;color:#0a5db4;transform:scaleX(0.9538);transform-origin:0 0;">2311100003</div>
<div class="a" style="left:90.20px;top:266px;font-size:4.7px;line-height:4.7px;color:#222;transform:scaleX(0.8977);transform-origin:0 0;">As Três Vassouras - Limpeza e Higiene Lda</div>
<div class="a" style="left:191.00px;top:263px;font-size:4.7px;line-height:4.7px;color:#222;transform:scaleX(0.9137);transform-origin:0 0;">V/Fatura A23 - As Três Vassouras - Limpeza e</div>
<div class="a" style="left:191.00px;top:269px;font-size:4.7px;line-height:4.7px;color:#222;transform:scaleX(0.9129);transform-origin:0 0;">Higiene Lda</div>
<div class="a" style="left:354.00px;top:265px;font-size:5.0px;line-height:5.0px;color:#222;transform:scaleX(0.8529);transform-origin:0 0;">0.00</div>
<div class="a" style="left:424.60px;top:265px;font-size:5.0px;line-height:5.0px;color:#222;transform:scaleX(0.8828);transform-origin:0 0;">123.00</div>
<div class="a" style="left:471.8px;top:265.00px;width:4.3px;height:4.8px;background:#f2f2f2;border:0.5px solid #e2e2e2;border-radius:0.6px"></div>
<div class="a" style="left:12px;top:276.20000000000005px;width:503.80px;height:0.50px;background:#e6e6e6;"></div>
<div class="a" style="left:364.00px;top:287px;font-size:4.2px;line-height:4.2px;color:#666;transform:scaleX(1.0486);transform-origin:0 0;">Total a débito</div>
<div class="a" style="left:368.50px;top:294px;font-size:7.6px;line-height:7.6px;color:#111;font-weight:bold;transform:scaleX(0.9335);transform-origin:0 0;">123.00</div>
<div class="a" style="left:489.00px;top:287px;font-size:4.2px;line-height:4.2px;color:#666;transform:scaleX(1.0403);transform-origin:0 0;">Total a crédito</div>
<div class="a" style="left:494.70px;top:294px;font-size:7.6px;line-height:7.6px;color:#111;font-weight:bold;transform:scaleX(0.9249);transform-origin:0 0;">123.00</div>
<svg class="a" style="left:332.6px;top:5.2px;overflow:visible" width="2.9" height="4.4" viewBox="0 0 2.9 4.4"><path d="M1.45 0 L2.9 1.9 L0 1.9 Z M0 2.5 L2.9 2.5 L1.45 4.4 Z" fill="#0a4fb0"/></svg>
<svg class="a" style="left:358.4px;top:5.1px;overflow:visible" width="5.5" height="4.4" viewBox="0 0 5.5 4.4"><path d="M0 0 H5.5 V3.9 L5.2 4.3 L4.7 3.9 H0 Z M1.3 1 V2.7 H3.6 L4 2.2 V1 Z" fill="#0a4fb0" fill-rule="evenodd"/></svg>
<svg class="a" style="left:373px;top:5.4px;overflow:visible" width="4" height="3.4" viewBox="0 0 4 3.4"><path d="M0.3 3.4 L0 2.2 L1.2 1.2 L2.2 0.2 L3.6 0 L4 1 L4 3.4 Z" fill="#0a4fb0"/></svg>
<svg class="a" style="left:386.3px;top:4.8px;overflow:visible" width="4.9" height="4.6" viewBox="0 0 4.9 4.6"><path d="M2.45 0 L3.1 1.6 L4.9 1.7 L3.55 2.85 L4 4.6 L2.45 3.65 L0.9 4.6 L1.35 2.85 L0 1.7 L1.8 1.6 Z" fill="#0a4fb0"/></svg>
<svg class="a" style="left:400px;top:4.9px;overflow:visible" width="5.1" height="4.7" viewBox="0 0 5.1 4.7"><circle cx="2.55" cy="2.4" r="1.95" fill="none" stroke="#0a4fb0" stroke-width="0.8"/><path d="M2.55 2.4 L1.9 4.7 H3.2 Z" fill="#fff"/><path d="M2.55 2.3 L2.25 3.9 H2.85Z" fill="#0a4fb0"/></svg>
<svg class="a" style="left:413.5px;top:5.2px;overflow:visible" width="5.6" height="4.3" viewBox="0 0 5.6 4.3"><circle cx="1.75" cy="1.75" r="1.25" fill="none" stroke="#0a4fb0" stroke-width="1.1" stroke-dasharray="0.7 0.35"/><circle cx="1.75" cy="1.75" r="0.9" fill="none" stroke="#0a4fb0" stroke-width="0.8"/><circle cx="4.3" cy="3.3" r="0.85" fill="#0a4fb0"/><circle cx="4.3" cy="3.3" r="0.3" fill="#fff"/></svg>
<div class="a" style="left:416px;top:3px;width:6.3px;height:3.5px;border-radius:50%;background:#f6a445"></div>
<div class="a" style="left:418.4px;top:4.4px;width:1.6px;height:0.8px;background:#fde4c4"></div>
<svg class="a" style="left:427.9px;top:4.4px;overflow:visible" width="5.2" height="5.2" viewBox="0 0 5.2 5.2"><rect x="0.35" y="1.3" width="4.5" height="3.55" fill="none" stroke="#5b95d6" stroke-width="0.6"/><rect x="0" y="1" width="5.2" height="1.1" fill="#5b95d6"/><rect x="1" y="0.1" width="0.6" height="1" fill="#5b95d6"/><rect x="3.6" y="0.1" width="0.6" height="1" fill="#5b95d6"/></svg>
<svg class="a" style="left:442px;top:5.3px;overflow:visible" width="4.9" height="3.7" viewBox="0 0 4.9 3.7"><path d="M0 0.2 H0.8 V3.7 H0 Z M0 1.6 H2.4 V3.7 H0Z M2.4 2.8 H4.9 V3.7 H2.4 Z" fill="#0a4fb0"/><path d="M0.8 1.6 L2.4 2.9 L2.4 1.6 Z" fill="#fff"/></svg>
<div class="a" style="left:444.9px;top:3px;width:5.2px;height:4.9px;border-radius:50%;background:#f08a17"></div>
<div class="a" style="left:447px;top:4.3px;width:1px;height:2px;background:#fff"></div>
<svg class="a" style="left:456.3px;top:7.4px;overflow:visible" width="4.6" height="2.2" viewBox="0 0 4.6 2.2"><path d="M1.6 0 H3.2 V0.9 H4.6 V1.5 H3.2 V2.2 H2.4 V1.5 H0 V0.9 H1.6Z" fill="#0a4fb0"/></svg>
<div class="a" style="left:456.6px;top:3px;width:7.5px;height:4.3px;border-radius:2.2px;background:#f08a17"></div>
<div class="a" style="left:458.6px;top:4.6px;width:1.2px;height:1.2px;background:#fde0bd;box-shadow:2px 0 0 #fde0bd"></div>
<svg class="a" style="left:470.1px;top:7.4px;overflow:visible" width="4.9" height="2.2" viewBox="0 0 4.9 2.2"><path d="M2.1 0 H2.8 V1.4 H4.9 V2.2 H0 V1.4 H2.1Z" fill="#0a4fb0"/></svg>
<div class="a" style="left:468.9px;top:3px;width:9.8px;height:4.3px;border-radius:2.2px;background:#f08a17"></div>
<div class="a" style="left:471.4px;top:4.6px;width:1.2px;height:1.2px;background:#fde0bd;box-shadow:2px 0 0 #fde0bd,4px 0 0 #fde0bd"></div>
<svg class="a" style="left:484px;top:4.4px;overflow:visible" width="6" height="5.6" viewBox="0 0 6 5.6"><path d="M0.6 5.3 L3.6 2.2" stroke="#0a5db4" stroke-width="1.1" stroke-linecap="round"/><path d="M3.2 2.6 C3 1.4 3.8 0.5 5 0.6 L4.2 1.5 L4.6 2.1 L5.5 1.4 C5.7 2.5 4.8 3.3 3.7 3" fill="#0a5db4"/></svg>
<svg class="a" style="left:498.1px;top:4.4px;overflow:visible" width="4.4" height="5.6" viewBox="0 0 4.4 5.6"><circle cx="2.3" cy="2" r="1.75" fill="#0a4fb0"/><rect x="1.7" y="3.4" width="1.2" height="1.6" fill="#0a4fb0"/><rect x="1.9" y="5" width="0.8" height="0.6" fill="#0a4fb0"/></svg>
<svg class="a" style="left:512.2px;top:1.9px;overflow:visible" width="10.3" height="11.5" viewBox="0 0 10.3 11.5"><defs><clipPath id="avc"><circle cx="5.15" cy="5.9" r="5.4"/></clipPath></defs><circle cx="5.15" cy="5.9" r="5.4" fill="#eeeeee"/><g clip-path="url(#avc)"><path d="M0.4 11.6 C0.5 8.2 1.5 6.9 3.4 6.4 L5.15 7.2 L6.9 6.4 C8.8 6.9 9.8 8.2 9.9 11.6Z" fill="#4d4d4f"/><path d="M3.8 6.5 L5.15 11.6 L6.5 6.5 L5.15 7.1Z" fill="#f4f4f4"/><ellipse cx="5.1" cy="3.7" rx="1.45" ry="2.2" fill="#bb7b52"/><path d="M3.5 2.6 C3.3 0.4 6.9 0.4 6.7 2.6 L6.4 2.1 L3.8 2.1Z" fill="#2b1e16"/><path d="M3.8 4.6 C4 6.6 6.2 6.6 6.4 4.6 L5.9 5.3 H4.3Z" fill="#3d2819"/></g></svg>
<svg class="a" style="left:103.7px;top:4.9px;overflow:visible" width="5.1" height="4.1" viewBox="0 0 5.1 4.1"><path d="M0 0 H1.3 V1 H0Z M1.8 0 H5.1 V1 H1.8Z M0 1.5 H1.3 V2.6 H0Z M1.8 1.5 H5.1 V2.6 H1.8Z M0 3.1 H1.3 V4.1 H0Z M1.8 3.1 H5.1 V4.1 H1.8Z" fill="#4a86cc"/></svg>
<svg class="a" style="left:110.9px;top:6.1px;overflow:visible" width="2.8" height="1.9" viewBox="0 0 2.8 1.9"><path d="M0 0 H2.8 L1.4 1.9Z" fill="#0a4fb0"/></svg>
<svg class="a" style="left:271.8px;top:5.1px;overflow:visible" width="4.2" height="4.2" viewBox="0 0 4.2 4.2"><circle cx="1.75" cy="1.75" r="1.3" fill="none" stroke="#0a4fb0" stroke-width="0.95"/><path d="M2.7 2.7 L3.9 3.9" stroke="#0a4fb0" stroke-width="1.1"/></svg>
<svg class="a" style="left:219px;top:19.2px;overflow:visible" width="3.9" height="2.9" viewBox="0 0 3.9 2.9"><ellipse cx="1.95" cy="1.45" rx="1.7" ry="1.25" fill="none" stroke="#333" stroke-width="0.8"/><circle cx="1.95" cy="1.45" r="0.5" fill="#777"/></svg>
<svg class="a" style="left:139.6px;top:57.2px;overflow:visible" width="3.5" height="3.4" viewBox="0 0 3.5 3.4"><circle cx="1.4" cy="1.4" r="1.05" fill="none" stroke="#333" stroke-width="0.7"/><path d="M2.1 2.1 L3.2 3.2" stroke="#333" stroke-width="0.8"/></svg>
<svg class="a" style="left:41.1px;top:59.6px;overflow:visible" width="1.8" height="1.4" viewBox="0 0 1.8 1.4"><path d="M0 0 H1.8 L0.9 1.4Z" fill="#777"/></svg>
<svg class="a" style="left:151px;top:57.9px;overflow:visible" width="3.8" height="3.9" viewBox="0 0 3.8 3.9"><circle cx="1.9" cy="1.95" r="1.45" fill="none" stroke="#7a8594" stroke-width="0.8"/></svg>
<svg class="a" style="left:176.9px;top:59.5px;overflow:visible" width="1.6" height="1.3" viewBox="0 0 1.6 1.3"><path d="M0 0 H1.6 L0.8 1.3Z" fill="#333"/></svg>
<svg class="a" style="left:187px;top:57.7px;overflow:visible" width="4.2" height="3.8" viewBox="0 0 4.2 3.8"><circle cx="1.6" cy="1.6" r="1.1" fill="none" stroke="#555" stroke-width="0.8"/><path d="M2.4 2.4 L3.6 3.6" stroke="#555" stroke-width="0.9"/></svg>
<svg class="a" style="left:393.9px;top:35.7px;overflow:visible" width="3.2" height="3.2" viewBox="0 0 3.2 3.2"><path d="M1.6 0 V3.2 M0 1.6 H3.2" stroke="#fff" stroke-width="0.9"/></svg>
<svg class="a" style="left:423.1px;top:36.2px;overflow:visible" width="2.4" height="2.4" viewBox="0 0 2.4 2.4"><circle cx="1.2" cy="1.2" r="1.1" fill="#555"/></svg>
<svg class="a" style="left:475.2px;top:35.6px;overflow:visible" width="3.3" height="3.2" viewBox="0 0 3.3 3.2"><rect x="0" y="0" width="3.3" height="3.2" fill="#555"/><path d="M1.1 0.4 V3 M2.2 0.4 V3" stroke="#eee" stroke-width="0.35"/></svg>
<svg class="a" style="left:510.8px;top:37px;overflow:visible" width="1.7" height="1.2" viewBox="0 0 1.7 1.2"><path d="M0 0 H1.7 L0.85 1.2Z" fill="#333"/></svg>
<svg class="a" style="left:466.9px;top:86.2px;overflow:visible" width="3.3" height="3.3" viewBox="0 0 3.3 3.3"><circle cx="1.65" cy="1.65" r="1.25" fill="none" stroke="#555c68" stroke-width="0.75"/><path d="M0.8 2.5 L2.5 0.8" stroke="#555c68" stroke-width="0.6"/></svg>
<svg class="a" style="left:471.9px;top:87.3px;overflow:visible" width="1.5" height="1.2" viewBox="0 0 1.5 1.2"><path d="M0 0 H1.5 L0.75 1.2Z" fill="#555c68"/></svg>
<svg class="a" style="left:482.1px;top:85.9px;overflow:visible" width="4.2" height="3.9" viewBox="0 0 4.2 3.9"><path d="M3.2 1.1 A1.55 1.55 0 1 0 3.5 2.4" fill="none" stroke="#474e5a" stroke-width="0.8"/><path d="M2.6 1.9 L1.9 1.4" stroke="#474e5a" stroke-width="0.6"/></svg>
<svg class="a" style="left:507px;top:85.6px;overflow:visible" width="3.6" height="4.2" viewBox="0 0 3.6 4.2"><path d="M0.5 1.2 H3.1 L2.8 4.2 H0.8Z" fill="#8a8f9a"/><rect x="0" y="0.5" width="3.6" height="0.6" fill="#8a8f9a"/><rect x="1.2" y="0" width="1.2" height="0.5" fill="#8a8f9a"/><path d="M1.5 1.6 V3.8 M2.1 1.6 V3.8" stroke="#d8dade" stroke-width="0.3"/></svg><svg class="a" style="left:0;top:0" width="528" height="340"><polyline points="0,334.5 5.5,339.5 522.5,339.5 527.5,334.5 527.5,5.5 522,0" fill="none" stroke="#fff" stroke-width="1"/></svg></div>
</body></html>
